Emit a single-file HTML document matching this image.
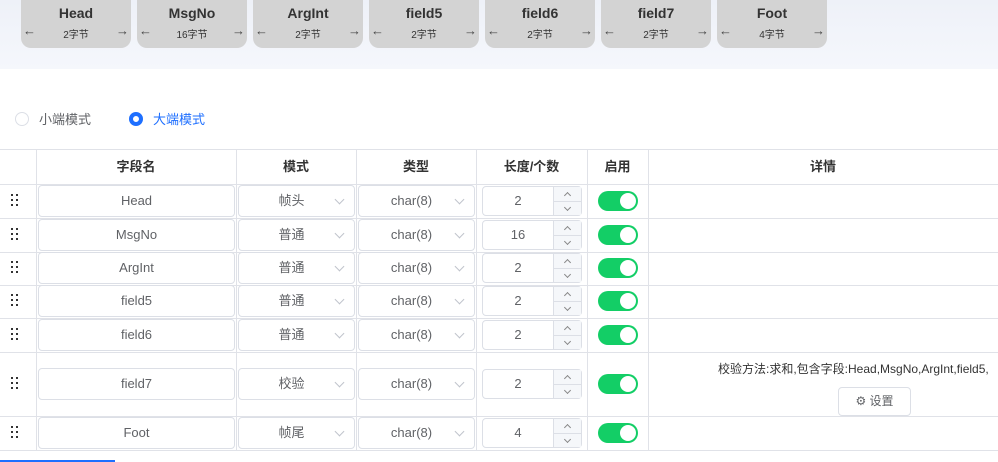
<!DOCTYPE html>
<html><head><meta charset="utf-8"><style>
*{box-sizing:border-box;margin:0;padding:0}
body{width:998px;height:462px;overflow:hidden;background:#fff;font-family:"Liberation Sans","Noto Sans CJK SC",sans-serif;color:#606266;position:relative}
.top{position:absolute;left:0;top:0;width:998px;height:69px;background:linear-gradient(#eef1f8,#f5f7fc)}
.card{position:absolute;top:-10px;width:110px;height:58px;background:#d3d3d3;border-radius:10px;text-align:center;color:#333}
.card b{display:block;margin-top:15px;font-size:14px;color:#333}
.card .s{font-size:10px;margin-top:5px;color:#333}
.card .l,.card .r{position:absolute;top:33px;font-size:13px;color:#444}
.card .l{left:2px}.card .r{right:2px}
.radio{position:absolute;top:109px;font-size:13px}
.rc{position:absolute;width:14px;height:14px;border-radius:50%;border:1px solid #dcdfe6;top:1px}
.rc.on{border:4px solid #1e6fff;background:#fff}
.hl{position:absolute;left:0;width:998px;height:1px;background:#e0e2e8}
.vl{position:absolute;top:149px;height:302px;width:1px;background:#e0e2e8}
.th{position:absolute;top:149px;height:35px;line-height:35px;text-align:center;font-size:13px;font-weight:bold;color:#333}
.box{position:absolute;border:1px solid #dcdfe6;border-radius:4px;background:#fff;font-size:12px;color:#606266;text-align:center;height:32px;line-height:30px}
.sel{text-align:left}
.sel .v{position:absolute;left:0;width:100%;text-align:center;padding-right:10px;font-size:13px}
.sel .ar{position:absolute;right:11px;top:10px;width:7px;height:7px;border-right:1px solid #c0c4cc;border-bottom:1px solid #c0c4cc;transform:rotate(45deg)}
.num .sp{position:absolute;right:0;top:0;width:28px;height:28px;border-left:1px solid #dcdfe6;background:#f5f7fa}
.num .sp:after{content:"";position:absolute;left:0;right:0;top:14px;height:1px;background:#dcdfe6}
.num .u,.num .d{position:absolute;left:11px;width:5px;height:5px;border-left:1px solid #888;border-top:1px solid #888}
.num .u{top:6px;transform:rotate(45deg)}.num .d{top:18px;transform:rotate(-135deg)}
.num .v{position:absolute;left:0;width:70px;text-align:center;font-size:13px}
.sw{position:absolute;left:598px;width:40px;height:20px;border-radius:10px;background:#13ce66}
.sw:after{content:"";position:absolute;right:2px;top:2px;width:16px;height:16px;border-radius:50%;background:#fff}
.drag{position:absolute;left:11px;width:8px;height:13px}
.drag i{position:absolute;width:2px;height:2px;background:#333}
</style></head><body>
<div class="top"></div>
<div class="card" style="left:21px"><b>Head</b><div class="s">2字节</div><span class="l">←</span><span class="r">→</span></div>
<div class="card" style="left:137px"><b>MsgNo</b><div class="s">16字节</div><span class="l">←</span><span class="r">→</span></div>
<div class="card" style="left:253px"><b>ArgInt</b><div class="s">2字节</div><span class="l">←</span><span class="r">→</span></div>
<div class="card" style="left:369px"><b>field5</b><div class="s">2字节</div><span class="l">←</span><span class="r">→</span></div>
<div class="card" style="left:485px"><b>field6</b><div class="s">2字节</div><span class="l">←</span><span class="r">→</span></div>
<div class="card" style="left:601px"><b>field7</b><div class="s">2字节</div><span class="l">←</span><span class="r">→</span></div>
<div class="card" style="left:717px"><b>Foot</b><div class="s">4字节</div><span class="l">←</span><span class="r">→</span></div>

<div class="rc" style="left:15px;top:112px"></div><div class="radio" style="left:39px">小端模式</div>
<div class="rc on" style="left:129px;top:112px"></div><div class="radio" style="left:153px;color:#1e6fff">大端模式</div>

<div class="hl" style="top:149px"></div><div class="hl" style="top:184px"></div><div class="hl" style="top:218px"></div><div class="hl" style="top:252px"></div><div class="hl" style="top:285px"></div><div class="hl" style="top:318px"></div><div class="hl" style="top:352px"></div><div class="hl" style="top:416px"></div><div class="hl" style="top:450px"></div>
<div class="vl" style="left:36px"></div><div class="vl" style="left:236px"></div><div class="vl" style="left:356px"></div><div class="vl" style="left:476px"></div><div class="vl" style="left:587px"></div><div class="vl" style="left:648px"></div>
<div class="th" style="left:36px;width:200px">字段名</div><div class="th" style="left:236px;width:120px">模式</div><div class="th" style="left:356px;width:120px">类型</div><div class="th" style="left:476px;width:111px">长度/个数</div><div class="th" style="left:587px;width:61px">启用</div><div class="th" style="left:648px;width:350px">详情</div>

<div id="rows"></div>
<div style="position:absolute;left:718px;top:360px;font-size:12px;color:#333;white-space:nowrap">校验方法:求和,包含字段:Head,MsgNo,ArgInt,field5,</div>
<div class="box" style="left:838px;top:387px;width:73px;height:29px;line-height:27px;color:#606266">⚙ 设置</div>
<div style="position:absolute;left:0;top:460px;width:115px;height:2px;background:#1e6fff"></div>
<script>
var R=[["Head","帧头","2",201],["MsgNo","普通","16",235],["ArgInt","普通","2",268],["field5","普通","2",301],["field6","普通","2",335],["field7","校验","2",384],["Foot","帧尾","4",433]];
var h="";R.forEach(function(r){var c=r[3],t=c-16;
h+='<div class="drag" style="top:'+(c-7)+'px"><i style="left:0;top:0"></i><i style="left:5px;top:0"></i><i style="left:0;top:5px"></i><i style="left:5px;top:5px"></i><i style="left:0;top:10px"></i><i style="left:5px;top:10px"></i></div>';
h+='<div class="box" style="left:38px;top:'+t+'px;width:197px;font-size:13px">'+r[0]+'</div>';
h+='<div class="box sel" style="left:238px;top:'+t+'px;width:117px"><span class="v">'+r[1]+'</span><span class="ar"></span></div>';
h+='<div class="box sel" style="left:358px;top:'+t+'px;width:117px"><span class="v">char(8)</span><span class="ar"></span></div>';
h+='<div class="box num" style="left:482px;top:'+(t+1)+'px;width:100px;height:30px;line-height:28px"><span class="v">'+r[2]+'</span><span class="sp"><i class="u"></i><i class="d"></i></span></div>';
h+='<div class="sw" style="top:'+(c-10)+'px"></div>';});
document.getElementById("rows").innerHTML=h;
</script>
</body></html>
